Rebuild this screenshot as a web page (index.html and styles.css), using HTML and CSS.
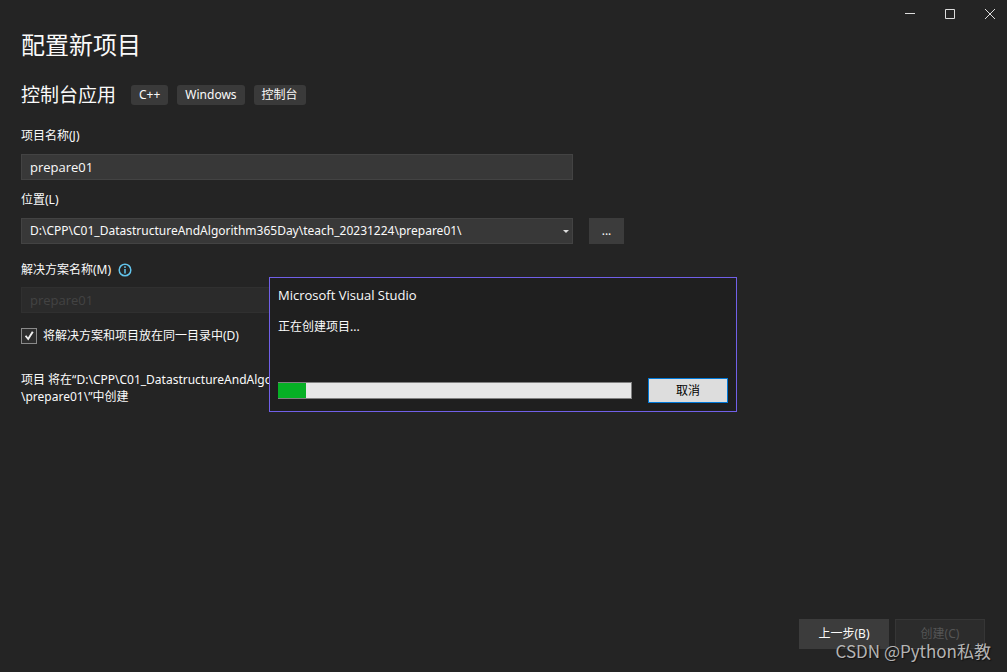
FILE: index.html
```html
<!DOCTYPE html>
<html lang="zh-CN">
<head>
<meta charset="utf-8">
<meta name="viewport" content="width=device-width, initial-scale=1">
<title>配置新项目</title>
<link rel="stylesheet" href="styles.css">
</head>
<body>
<div class="window">
  <header class="titlebar">
    <button class="caption" type="button" aria-label="最小化"><svg viewBox="0 0 10 10"><path d="M0 4.5h10"/></svg></button>
    <button class="caption" type="button" aria-label="最大化"><svg viewBox="0 0 10 10"><path d="M.5.5h9v9h-9z"/></svg></button>
    <button class="caption" type="button" aria-label="关闭"><svg viewBox="0 0 10 10"><path d="M0 0l10 10M10 0L0 10"/></svg></button>
  </header>

  <main class="content">
    <h1 class="title">配置新项目</h1>
    <div class="template">
      <h2 class="template-name">控制台应用</h2>
      <ul class="tags">
        <li class="tag">C++</li>
        <li class="tag">Windows</li>
        <li class="tag">控制台</li>
      </ul>
    </div>

    <form class="form">
      <div class="field">
        <label class="label" for="project">项目名称(J)</label>
        <input class="box" id="project" type="text" value="prepare01">
      </div>
      <div class="field">
        <label class="label" for="location">位置(L)</label>
        <div class="row">
          <div class="select-wrap">
            <select class="box select" id="location">
              <option>D:\CPP\C01_DatastructureAndAlgorithm365Day\teach_20231224\prepare01\</option>
            </select>
            <svg class="arrow" viewBox="0 0 6 3"><path d="M0 0h6L3 3z"/></svg>
          </div>
          <button class="browse" type="button">...</button>
        </div>
      </div>
      <div class="field solution">
        <div class="label-row">
          <label class="label" for="solution">解决方案名称(M)</label>
          <svg class="info" viewBox="0 0 14 14"><circle cx="7" cy="7" r="5.8"/><path d="M7 6v4.5M7 3.3v1.6"/></svg>
        </div>
        <input class="box" id="solution" type="text" value="prepare01" disabled>
      </div>
      <div class="check-row">
        <input class="check" id="same" type="checkbox" checked>
        <label class="label" for="same">将解决方案和项目放在同一目录中(D)</label>
      </div>
      <p class="summary">项目 将在“<span class="path">D:\CPP\C01_DatastructureAndAlgorithm365Day\teach_20231224\prepare01</span><wbr><span class="path">\prepare01\</span>”中创建</p>
    </form>
  </main>

  <footer class="footer">
    <button class="action" type="button">上一步(B)</button>
    <button class="action" type="button" disabled>创建(C)</button>
  </footer>
  <div class="watermark">CSDN @Python私教</div>

  <section class="dialog" role="dialog" aria-labelledby="dialog-title">
    <h3 class="dialog-title" id="dialog-title">Microsoft Visual Studio</h3>
    <p class="dialog-text" id="dialog-text">正在创建项目...</p>
    <div class="dialog-row">
      <progress class="progress" value="8" max="100" aria-labelledby="dialog-text"></progress>
      <button class="cancel" type="button">取消</button>
    </div>
  </section>
</div>
</body>
</html>
```
FILE: styles.css
```css
* {
  box-sizing: border-box;
}

body {
  margin: 0;
  background: #242424;
  color: #fafafa;
  font: 12px/18px "Noto Sans", "Noto Sans CJK SC", sans-serif;
}

button,
input,
select {
  font: inherit;
  color: inherit;
}

button {
  padding: 0;
  border: 0;
}

h1,
h2,
h3,
p,
ul {
  margin: 0;
  padding: 0;
  font-weight: 400;
}

.window {
  position: relative;
  display: flex;
  flex-direction: column;
  min-height: 100vh;
}

.titlebar {
  display: flex;
  justify-content: flex-end;
  gap: 6px;
}

.caption {
  display: grid;
  place-items: center;
  width: 34px;
  height: 28px;
  background: none;
}

.caption svg {
  width: 10px;
  height: 10px;
  fill: none;
  stroke: #dcdcdc;
}

.content {
  flex: 1;
  padding: 0 21px;
}

.title {
  font-size: 24px;
  line-height: 34px;
}

.template {
  display: flex;
  align-items: center;
  gap: 15px;
  margin-top: 18px;
}

.template-name {
  font-size: 19px;
  line-height: 30px;
}

.tags {
  display: flex;
  gap: 9px;
  list-style: none;
}

.tag {
  padding: 0 8px;
  border-radius: 3px;
  background: #3a3a3a;
  line-height: 20px;
}

.form {
  max-width: 603px;
  margin-top: 17px;
}

.field {
  display: flex;
  flex-direction: column;
  gap: 9px;
  margin-bottom: 11px;
}

.label {
  line-height: 18px;
}

.label-row {
  display: flex;
  align-items: center;
  gap: 7px;
}

.info {
  width: 14px;
  height: 14px;
  fill: none;
  stroke: #62c4ec;
  stroke-width: 1.5;
}

.box {
  width: 100%;
  max-width: 552px;
  height: 26px;
  padding: 0 8px;
  border: 1px solid #434343;
  border-radius: 0;
  background: #383838;
  font-family: "Open Sans", "Noto Sans CJK SC", sans-serif;
  font-size: 13px;
}

.box:disabled {
  border-color: #303030;
  background: #2b2b2b;
  color: #434343;
}

.row {
  display: flex;
  gap: 16px;
}

.select-wrap {
  position: relative;
  flex: 1;
}

.select {
  display: block;
  appearance: none;
  font-family: "Noto Sans", "Noto Sans CJK SC", sans-serif;
  font-size: 12px;
}

.arrow {
  position: absolute;
  top: 12px;
  right: 4px;
  width: 6px;
  height: 3px;
  fill: #dcdcdc;
}

.browse {
  width: 35px;
  background: #3c3c3c;
}

.solution {
  gap: 8px;
  margin-top: 17px;
}

.check-row {
  display: flex;
  align-items: center;
  gap: 6px;
  margin-top: 14px;
}

.check {
  width: 16px;
  height: 16px;
  margin: 0;
  border: 1px solid #8a8a8a;
  appearance: none;
  background: #2e2e2e;
}

.check:checked::before {
  content: "";
  display: block;
  width: 14px;
  height: 14px;
  background: #f0f0f0;
  clip-path: polygon(20% 52%, 31% 44%, 43% 60%, 71% 16%, 83% 24%, 45% 82%);
}

.summary {
  max-width: 552px;
  margin-top: 26px;
  line-height: 17px;
}

.path {
  white-space: nowrap;
}

.footer {
  display: flex;
  justify-content: flex-end;
  gap: 6px;
  padding: 0 22px 23px;
}

.action {
  width: 90px;
  height: 30px;
  background: #3c3c3c;
}

.action:disabled {
  border: 1px solid #363636;
  background: #2c2c2c;
  color: #555;
}

.watermark {
  position: absolute;
  right: 16px;
  bottom: 9px;
  color: #b4b4b4;
  font: 17px/24px "Noto Sans CJK SC", sans-serif;
  text-shadow: 1px 1px 1px #111;
}

.dialog {
  position: absolute;
  top: 277px;
  left: 0;
  right: 1px;
  width: 468px;
  margin: 0 auto;
  padding: 8px;
  border: 1px solid #7160e8;
  background: #1f1f1f;
}

.dialog-title {
  font-family: "Open Sans", "Noto Sans CJK SC", sans-serif;
  font-size: 13px;
  line-height: 18px;
}

.dialog-text {
  margin-top: 14px;
}

.dialog-row {
  display: flex;
  align-items: center;
  gap: 16px;
  margin-top: 42px;
}

.progress {
  flex: 1;
  min-width: 0;
  height: 17px;
  border: 1px solid #808080;
  border-left: 0;
  appearance: none;
  background: #e6e6e6;
}

.progress::-webkit-progress-bar {
  background: #e6e6e6;
}

.progress::-webkit-progress-value {
  background: #06b025;
}

.cancel {
  width: 80px;
  height: 25px;
  border: 1px solid #0078d7;
  background: #ddd;
  color: #000;
}
```
